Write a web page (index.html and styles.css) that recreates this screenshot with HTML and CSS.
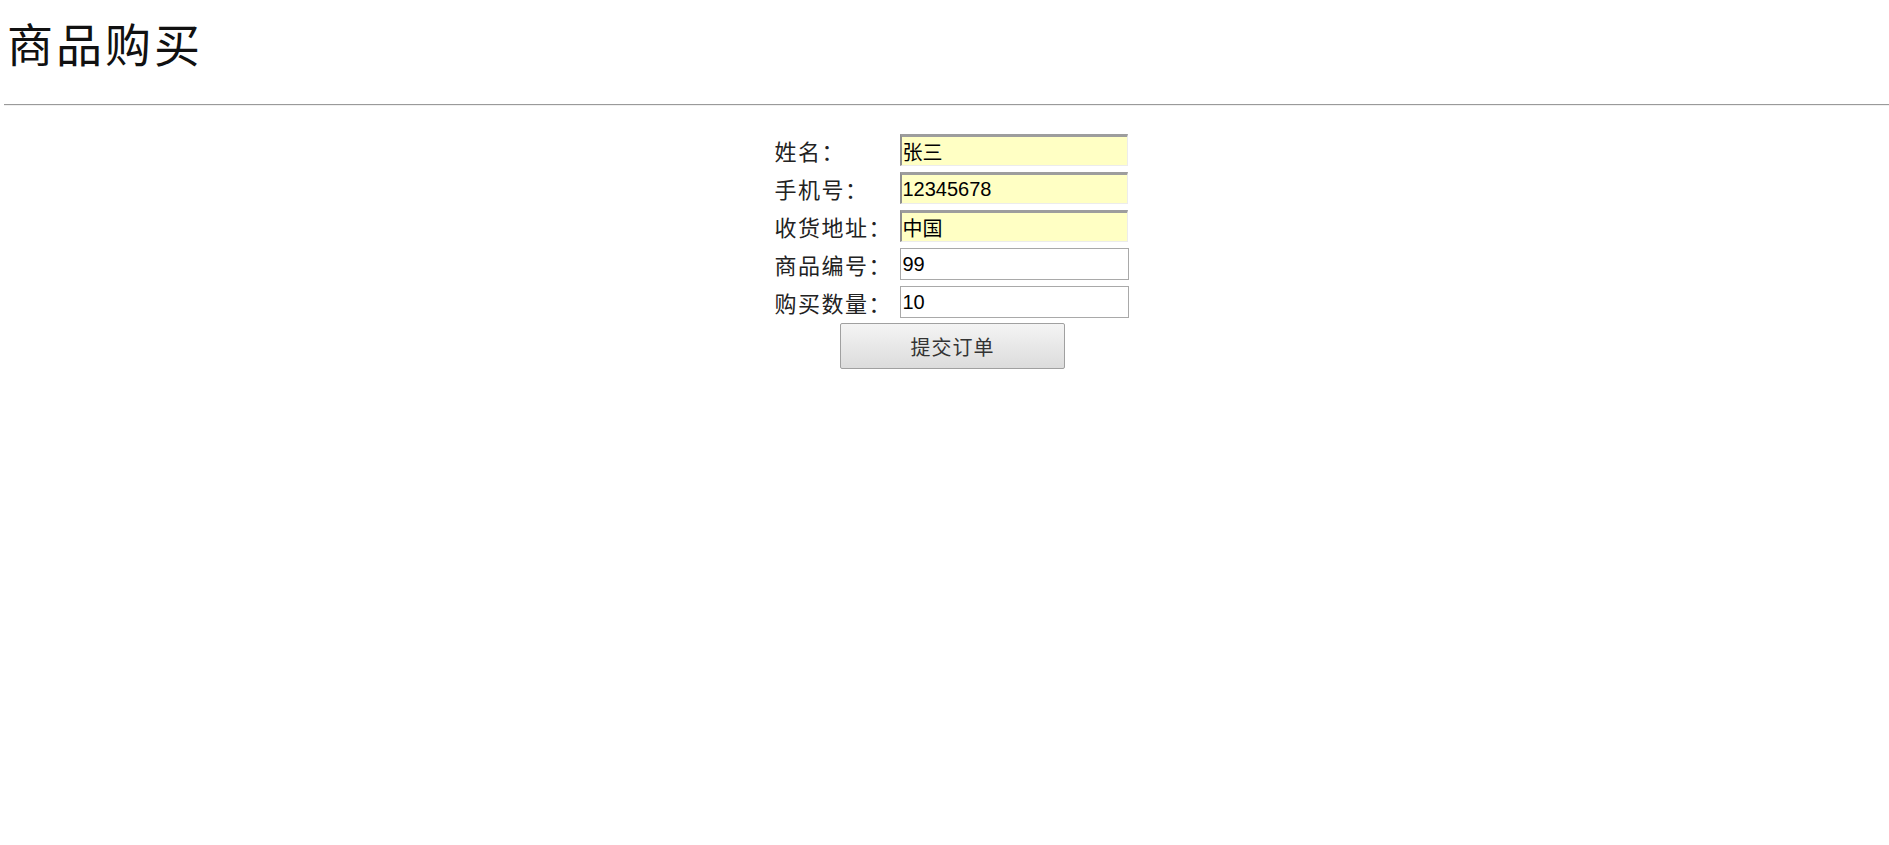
FILE: index.html
```html
<!DOCTYPE html>
<html lang="zh-CN">
<head>
    <meta charset="UTF-8">
    <title>商品购买</title>
    <link rel="stylesheet" href="styles.css">
</head>
<body>
    <h1>商品购买</h1>
    <hr>
    <form class="order-form">
        <label for="name">姓名：</label>
        <input type="text" id="name" class="filled" value="张三">

        <label for="phone">手机号：</label>
        <input type="text" id="phone" class="filled" value="12345678">

        <label for="addr">收货地址：</label>
        <input type="text" id="addr" class="filled" value="中国">

        <label for="goods">商品编号：</label>
        <input type="text" id="goods" value="99">

        <label for="count">购买数量：</label>
        <input type="text" id="count" value="10">

        <div class="form-actions">
            <button type="button">提交订单</button>
        </div>
    </form>
</body>
</html>
```

FILE: styles.css
```css
body {
    margin: 0;
    padding: 0 0 0 4px;
    font-family: "Liberation Serif", "Noto Sans CJK SC", serif;
    color: #111;
    background: #fff;
}

h1 {
    margin: 0;
    padding: 19px 0 0 3px;
    font-size: 46px;
    line-height: 46px;
    letter-spacing: 3px;
    font-weight: normal;
    font-family: "Noto Sans CJK SC", serif;
}

hr {
    margin: 39px 0 0 0;
    height: 0;
    border: 0;
    border-top: 1px solid #9a9a9a;
    border-bottom: 1px solid #f0f0f0;
}

.order-form {
    width: 354px;
    margin: 28px auto 0;
    padding-left: 10px;
    display: grid;
    grid-template-columns: 125px 229px;
    row-gap: 6px;
    align-items: center;
}

.order-form label {
    font-family: "Noto Sans CJK SC", sans-serif;
    font-size: 22px;
    line-height: 24px;
    letter-spacing: 1.5px;
    color: #222;
}

.order-form input {
    box-sizing: border-box;
    width: 229px;
    height: 32px;
    margin: 0;
    padding: 0 2px;
    border: 1px solid #a9a9a9;
    font-family: "Liberation Sans", "Noto Sans CJK SC", sans-serif;
    font-size: 20px;
    color: #000;
    background: #fff;
    outline: none;
}

.order-form input.filled {
    width: 228px;
    border-width: 3px 1px 1px 2px;
    border-style: solid;
    border-color: #9d9d9d #ececec #ececec #8f8f8f;
    background: #ffffc4;
    padding-left: 1px;
}

.form-actions {
    grid-column: 1 / 3;
    display: flex;
    justify-content: center;
    margin-top: -1px;
    padding-left: 2px;
}

.form-actions button {
    width: 225px;
    height: 46px;
    border: 1px solid #a0a0a0;
    border-radius: 2px;
    background: linear-gradient(#f4f4f4, #dcdcdc);
    font-family: "Noto Sans CJK SC", serif;
    font-size: 20px;
    letter-spacing: 1px;
    color: #333;
    cursor: pointer;
}
```
